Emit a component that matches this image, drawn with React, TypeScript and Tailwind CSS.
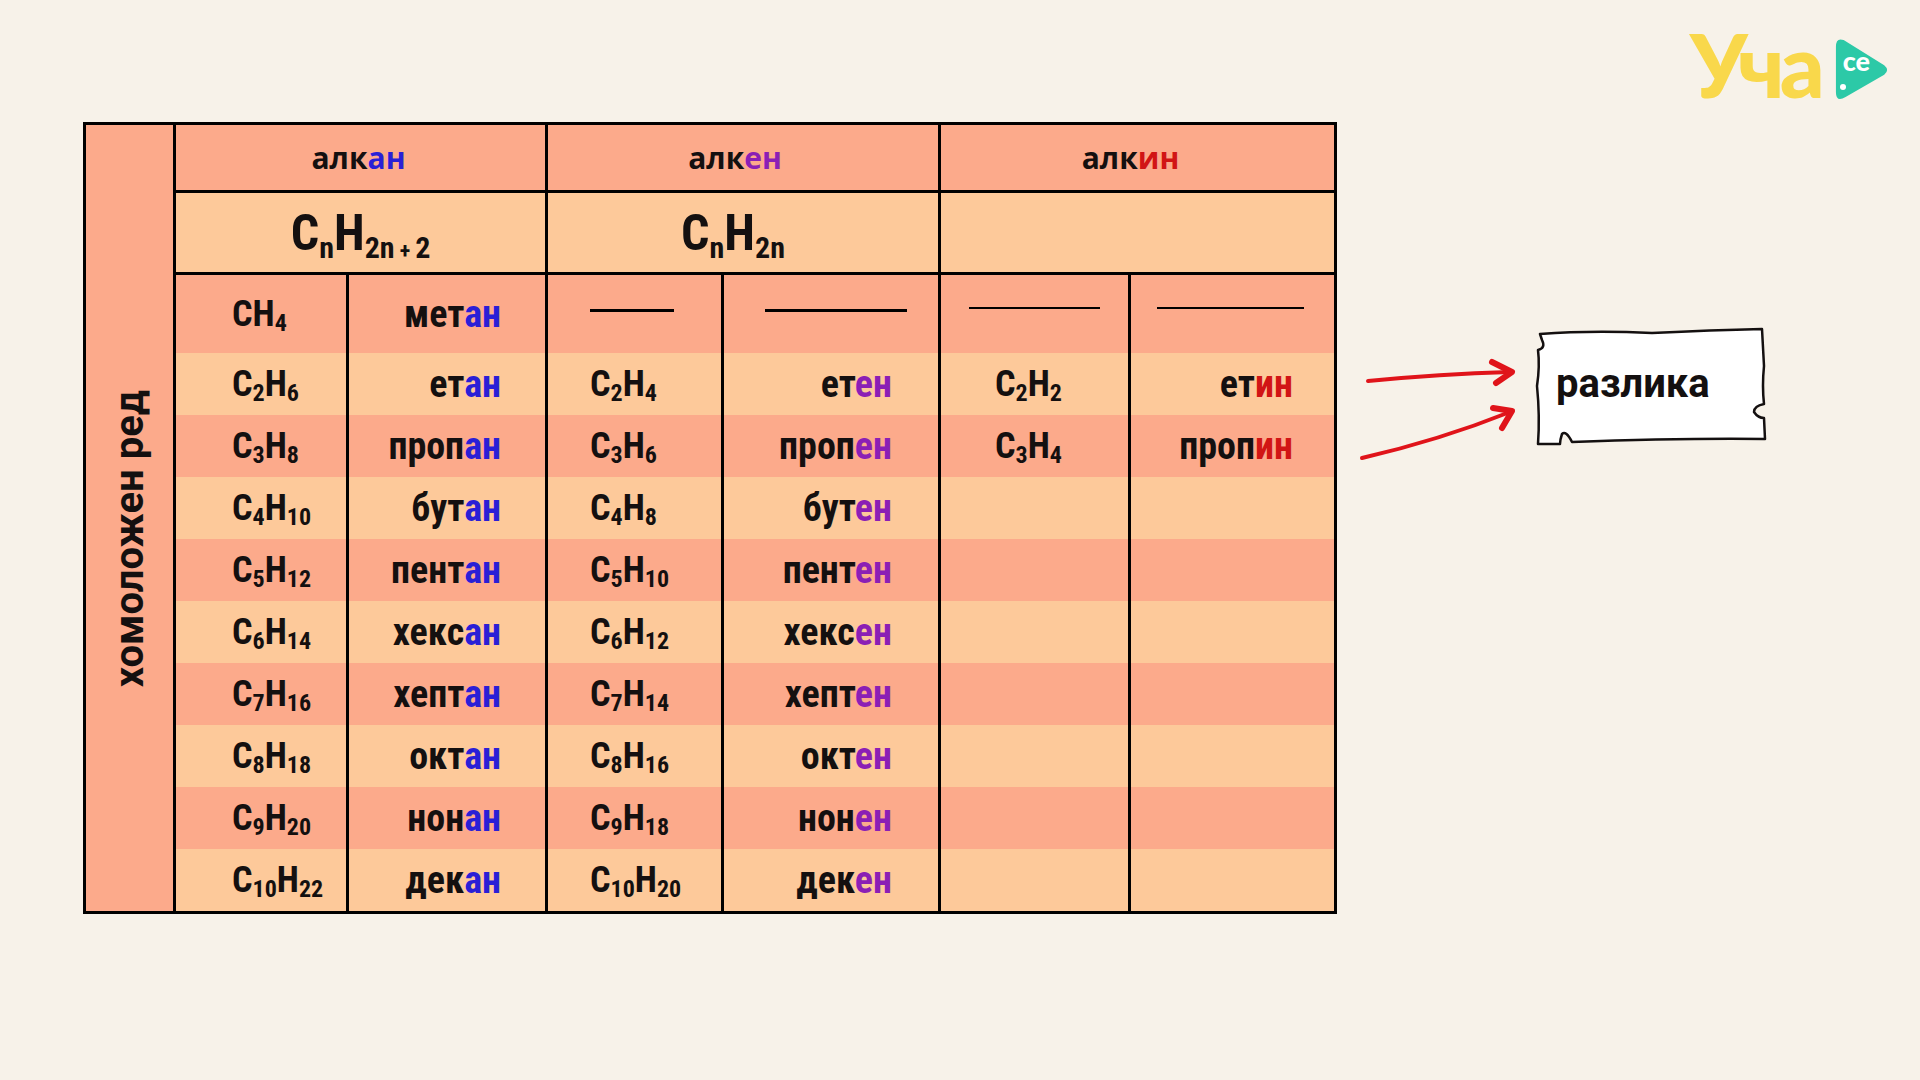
import React from "react";

const SALMON = "bg-[#fcaa8b]";
const PEACH = "bg-[#fdc99a]";

type Row = {
  a: [string, string];
  an: string;
  e?: [string, string];
  en?: string;
  y?: [string, string];
  yn?: string;
};

const rows: Row[] = [
  { a: ["", "4"], an: "мет" },
  { a: ["2", "6"], an: "ет", e: ["2", "4"], en: "ет", y: ["2", "2"], yn: "ет" },
  { a: ["3", "8"], an: "проп", e: ["3", "6"], en: "проп", y: ["3", "4"], yn: "проп" },
  { a: ["4", "10"], an: "бут", e: ["4", "8"], en: "бут" },
  { a: ["5", "12"], an: "пент", e: ["5", "10"], en: "пент" },
  { a: ["6", "14"], an: "хекс", e: ["6", "12"], en: "хекс" },
  { a: ["7", "16"], an: "хепт", e: ["7", "14"], en: "хепт" },
  { a: ["8", "18"], an: "окт", e: ["8", "16"], en: "окт" },
  { a: ["9", "20"], an: "нон", e: ["9", "18"], en: "нон" },
  { a: ["10", "22"], an: "дек", e: ["10", "20"], en: "дек" },
];

const cond = "font-['Roboto_Condensed','Liberation_Sans_Narrow',sans-serif]";

function Formula({ n }: { n: [string, string] }) {
  return (
    <span className={`${cond} text-[36px] font-bold leading-none text-[#141010]`}>
      C<span className="relative top-[5px] text-[24px]">{n[0]}</span>H
      <span className="relative top-[5px] text-[24px]">{n[1]}</span>
    </span>
  );
}

function Name({ stem, end, color }: { stem: string; end: string; color: string }) {
  return (
    <span className={`${cond} text-[38px] font-bold leading-none`}>
      <span className="text-[#141010]">{stem}</span>
      <span className={color}>{end}</span>
    </span>
  );
}

export default function App() {
  return (
    <div lang="mk" className="relative h-[1080px] w-[1920px] overflow-hidden bg-[#f7f2e9]">
      {/* logo */}
      <div className="absolute left-[1690px] top-[20px] flex items-center">
        <span className="font-['Lato',sans-serif] text-[88px] font-black leading-none tracking-[-5px] text-[#f9d84b]">
          Уча
        </span>
        <div className="relative ml-[14px] mt-[12px] h-[68px] w-[56px]">
          <svg viewBox="0 0 58 70" className="absolute inset-0 h-full w-full">
            <path d="M10 4 Q2 1 2 11 L2 58 Q2 69 12 63 L52 40 Q58 35 52 30 Z" fill="#2cc9a7" />
          </svg>
          <span className="absolute left-[9px] top-[11px] font-['Lato',sans-serif] text-[27px] font-black leading-none text-white">
            ce
          </span>
          <span className="absolute left-[6px] top-[48px] h-[6px] w-[6px] rounded-full bg-white" />
        </div>
      </div>

      <div className="pl-[83px] pt-[122px]">
        <div className="flex w-[1254px] border-[3px] border-black">
          {/* side column */}
          <div className={`${SALMON} flex w-[90px] items-center justify-center border-r-[3px] border-black pt-[42px]`}>
            <span className="rotate-180 font-['Roboto',sans-serif] text-[40px] font-bold leading-none text-[#141010] [writing-mode:vertical-rl]">
              хомоложен ред
            </span>
          </div>

          <div className="grid flex-1 grid-cols-[173px_199px_176px_217px_190px_1fr]">
            {/* headers */}
            {[
              ["алк", "ан", "text-[#2a1fd6]", "pr-[4px] border-r-[3px]"],
              ["алк", "ен", "text-[#8b1fb5]", "pr-[16px] border-r-[3px]"],
              ["алк", "ин", "text-[#d11515]", "pr-[14px]"],
            ].map(([s, e, c, x], i) => (
              <div
                key={i}
                className={`${SALMON} col-span-2 flex h-[68px] items-center justify-center border-b-[3px] border-black ${x} font-['Open_Sans',sans-serif] text-[30px] font-bold text-[#141010]`}
              >
                {s}
                <span className={c}>{e}</span>
              </div>
            ))}

            {/* general formulas */}
            <div className={`${PEACH} col-span-2 flex h-[82px] items-center justify-center border-b-[3px] border-r-[3px] border-black`}>
              <span className={`${cond} text-[50px] font-bold leading-none text-[#141010]`}>
                C<span className="relative top-[8px] text-[30px]">n</span>H
                <span className="relative top-[8px] text-[30px]">2n</span>
                <span className="relative top-[8px] text-[22px]"> + </span>
                <span className="relative top-[8px] text-[30px]">2</span>
              </span>
            </div>
            <div className={`${PEACH} col-span-2 flex h-[82px] items-center justify-center border-b-[3px] border-r-[3px] border-black pr-[20px]`}>
              <span className={`${cond} text-[50px] font-bold leading-none text-[#141010]`}>
                C<span className="relative top-[8px] text-[30px]">n</span>H
                <span className="relative top-[8px] text-[30px]">2n</span>
              </span>
            </div>
            <div className={`${PEACH} col-span-2 h-[82px] border-b-[3px] border-black`} />

            {/* data rows */}
            {rows.map((r, i) => {
              const bg = i % 2 === 0 ? SALMON : PEACH;
              const h = i === 0 ? "h-[78px]" : "h-[62px]";
              const cell = `${bg} ${h} flex items-center border-black`;
              return (
                <React.Fragment key={i}>
                  <div className={`${cell} border-r-[3px] pl-[56px]`}>
                    <Formula n={r.a} />
                  </div>
                  <div className={`${cell} justify-end border-r-[3px] pr-[44px]`}>
                    <Name stem={r.an} end="ан" color="text-[#2a1fd6]" />
                  </div>
                  <div className={`${cell} border-r-[3px] pl-[42px]`}>
                    {i === 0 ? <div className="mb-[8px] h-[3px] w-[84px] bg-black" /> : r.e && <Formula n={r.e} />}
                  </div>
                  <div className={`${cell} justify-end border-r-[3px] ${i === 0 ? "pr-[31px]" : "pr-[46px]"}`}>
                    {i === 0 ? (
                      <div className="mb-[8px] h-[3px] w-[142px] bg-black" />
                    ) : (
                      r.en && <Name stem={r.en} end="ен" color="text-[#8b1fb5]" />
                    )}
                  </div>
                  <div className={`${cell} border-r-[3px] ${i === 0 ? "pl-[28px]" : "pl-[54px]"}`}>
                    {i === 0 ? (
                      <div className="mb-[12px] h-[2px] w-[131px] bg-black" />
                    ) : (
                      r.y && <Formula n={r.y} />
                    )}
                  </div>
                  <div className={`${cell} justify-end ${i === 0 ? "pr-[30px]" : "pr-[41px]"}`}>
                    {i === 0 ? (
                      <div className="mb-[12px] h-[2px] w-[147px] bg-black" />
                    ) : (
                      r.yn && <Name stem={r.yn} end="ин" color="text-[#d11515]" />
                    )}
                  </div>
                </React.Fragment>
              );
            })}
          </div>
        </div>
      </div>

      {/* arrows and note */}
      <svg className="absolute left-[1350px] top-[340px] h-[140px] w-[180px]" viewBox="0 0 180 140">
        <path d="M18 41 Q90 34 160 32" stroke="#e0141a" strokeWidth="4" fill="none" strokeLinecap="round" />
        <path d="M142 22 L162 32 L146 43" stroke="#e0141a" strokeWidth="6" fill="none" strokeLinecap="round" strokeLinejoin="round" />
        <path d="M12 118 Q90 100 160 72" stroke="#e0141a" strokeWidth="4" fill="none" strokeLinecap="round" />
        <path d="M143 68 L162 71 L152 88" stroke="#e0141a" strokeWidth="6" fill="none" strokeLinecap="round" strokeLinejoin="round" />
      </svg>
      <div className="absolute left-[1532px] top-[326px] h-[122px] w-[240px]">
        <svg viewBox="0 0 240 122" className="absolute inset-0 h-full w-full">
          <path
            d="M8 8 Q60 4 120 7 Q180 4 230 3 L232 40 Q230 60 232 78 Q222 80 222 86 Q226 92 232 92 L233 113 Q150 112 40 116 Q34 104 30 108 Q28 114 28 118 L6 118 Q8 90 5 60 Q8 40 6 24 Q14 22 10 14 Z"
            fill="#ffffff"
            stroke="#141010"
            strokeWidth="2.5"
            strokeLinejoin="round"
          />
        </svg>
        <span className="absolute left-[24px] top-[38px] font-['Roboto',sans-serif] text-[40px] font-bold leading-none text-[#141010]">
          разлика
        </span>
      </div>
    </div>
  );
}
